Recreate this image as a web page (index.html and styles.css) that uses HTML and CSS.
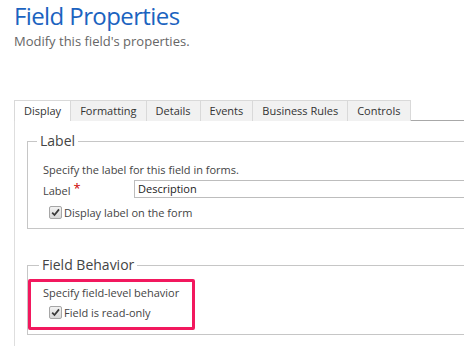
FILE: index.html
```html
<!DOCTYPE html>
<html lang="en">
<head>
    <meta charset="UTF-8">
    <title>Field Properties</title>
    <link rel="stylesheet" href="styles.css">
</head>
<body>
<div id="page">
    <div class="header">
        <h1 class="title">Field Properties</h1>
        <p class="subtitle">Modify this field's properties.</p>
    </div>

    <div class="tabs">
        <span class="tab on">Display</span>
        <span class="tab">Formatting</span>
        <span class="tab">Details</span>
        <span class="tab">Events</span>
        <span class="tab">Business Rules</span>
        <span class="tab">Controls</span>
        <span class="tab-rest"></span>
    </div>

    <div class="pane">
        <fieldset class="group">
            <legend>Label</legend>
            <p class="hint">Specify the label for this field in forms.</p>
            <div class="row">
                <span class="row-label">Label <span class="req">*</span></span>
                <span class="text-box">Description</span>
            </div>
            <div class="check">
                <span class="box">
                    <svg width="13" height="13" viewBox="0 0 13 13"><path d="M3.2 6.6 L5.5 9 L10 3.4" fill="none" stroke="#3a3a3a" stroke-width="1.8"/></svg>
                </span>
                Display label on the form
            </div>
        </fieldset>

        <fieldset class="group behavior">
            <legend>Field Behavior</legend>
            <div class="mark">
                <p class="hint">Specify field-level behavior</p>
                <div class="check">
                    <span class="box">
                        <svg width="13" height="13" viewBox="0 0 13 13"><path d="M3.2 6.6 L5.5 9 L10 3.4" fill="none" stroke="#3a3a3a" stroke-width="1.8"/></svg>
                    </span>
                    Field is read-only
                </div>
            </div>
        </fieldset>
    </div>
</div>
</body>
</html>
```

FILE: styles.css
```css
html, body {
    margin: 0;
    padding: 0;
    background: #fff;
    overflow: hidden;
}

#page {
    width: 700px;
    font-family: "Open Sans", "Liberation Sans", sans-serif;
    color: #444;
}

.header {
    padding: 0 0 0 14px;
    height: 100px;
}

.title {
    margin: 0;
    padding-top: 1px;
    font-size: 24px;
    line-height: 30px;
    font-weight: normal;
    color: #1b63c0;
    letter-spacing: -0.6px;
}

.subtitle {
    margin: 2px 0 0 0;
    font-size: 13px;
    line-height: 17px;
    color: #666;
}

.tabs {
    display: flex;
    padding-left: 14px;
    height: 21px;
}

.tab {
    font-size: 11px;
    line-height: 20px;
    padding: 0 9px;
    color: #333;
    background: #f1f1f1;
    border: 1px solid #d9d9d9;
    border-bottom: none;
    margin-right: -1px;
}

.tab.on {
    background: #fff;
}

.tab-rest {
    flex: 1;
    border-bottom: 1px solid #a8a8a8;
    margin-left: 1px;
}

.pane {
    margin-left: 14px;
    border-left: 1px solid #dedede;
    padding: 11px 0 20px 12px;
}

.group {
    margin: 0;
    padding: 0 0 8px 9px;
    border: 1px solid #c6c6c6;
    width: 600px;
}

.group legend {
    font-size: 14px;
    line-height: 18px;
    padding: 0 3px;
    color: #444;
}

.behavior {
    margin-top: 27px;
    padding: 0 0 4px 0;
}

.behavior legend {
    margin-left: 11px;
}

.hint {
    margin: 12px 0 0 6px;
    font-size: 11px;
    line-height: 16px;
}

.row {
    display: flex;
    align-items: center;
    margin: 1px 0 0 6px;
    font-size: 11px;
}

.row-label {
    width: 91px;
}

.req {
    color: #c00;
    font-size: 13px;
    vertical-align: 2px;
}

.text-box {
    flex: 1;
    height: 16px;
    line-height: 16px;
    border: 1px solid #bdbdbd;
    padding-left: 3px;
    color: #222;
    font-size: 11px;
}

.check {
    display: flex;
    align-items: center;
    gap: 2px;
    margin: 7px 0 0 12px;
    font-size: 11px;
}

.box {
    display: block;
    width: 13px;
    height: 13px;
    box-sizing: border-box;
    border: 1px solid #a6a6a6;
    border-radius: 2px;
    background: linear-gradient(#f2f2f2, #d8d8d8);
    position: relative;
}

.box svg {
    position: absolute;
    left: -1px;
    top: -1px;
}

.mark {
    width: 149px;
    border: 3px solid #f2185e;
    border-radius: 2px;
    padding: 0 0 7px 12px;
    margin-top: 5px;
}

.mark .hint {
    margin: 3px 0 0 0;
}

.mark .check {
    margin: 4px 0 0 6px;
}
```
